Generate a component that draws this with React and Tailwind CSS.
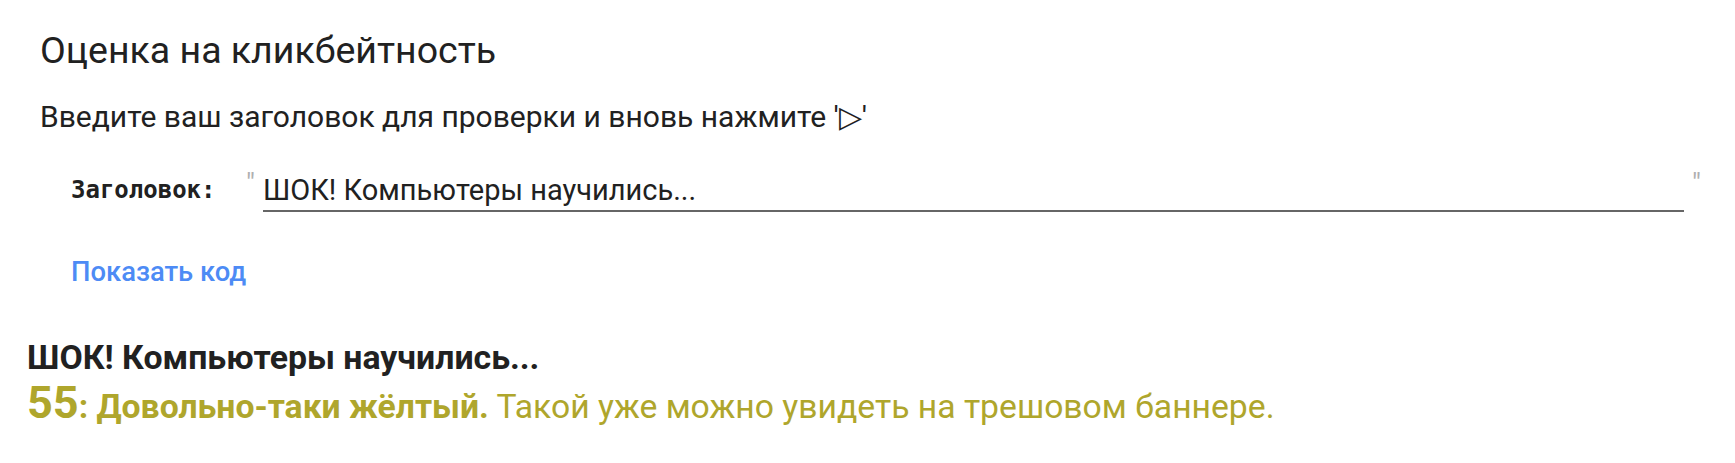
export default function App() {
  return (
    <div className="w-[1735px] h-[463px] bg-white font-['Roboto',sans-serif] text-[#212121] overflow-hidden">
      <div className="pl-[40px] pt-[28px]">
        <h1 className="text-[37.5px] leading-[44px] font-normal">Оценка на кликбейтность</h1>
        <p className="mt-[27px] text-[30px] leading-[36px]">Введите ваш заголовок для проверки и вновь нажмите '▷'</p>
        <div className="mt-[35px] flex items-start pl-[31px]">
          <label className="w-[175px] font-['DejaVu_Sans_Mono',monospace] font-bold text-[24px] leading-[40px] text-[#212121]">Заголовок:</label>
          <span className="text-[#b0b0b0] text-[28px] leading-[28px] w-[17px]">"</span>
          <div className="flex-1 border-b-2 border-[#666] text-[29px] leading-[40px]">ШОК! Компьютеры научились...</div>
          <span className="text-[#b0b0b0] text-[28px] leading-[28px] w-[51px] pl-[8px]">"</span>
        </div>
        <div className="mt-[43px] pl-[31px] text-[27.4px] leading-[34px] font-medium text-[#4d8bf5]">Показать код</div>
      </div>
      <div className="pl-[27px] mt-[49px]">
        <div className="text-[33.8px] leading-[40px] font-bold">ШОК! Компьютеры научились...</div>
        <div className="mt-[2px] text-[#afa62c] text-[33.7px] leading-[46px]">
          <span className="text-[45px] font-bold">55</span>
          <span className="font-bold">: Довольно-таки жёлтый.</span> Такой уже можно увидеть на трешовом баннере.
        </div>
      </div>
    </div>
  )
}
